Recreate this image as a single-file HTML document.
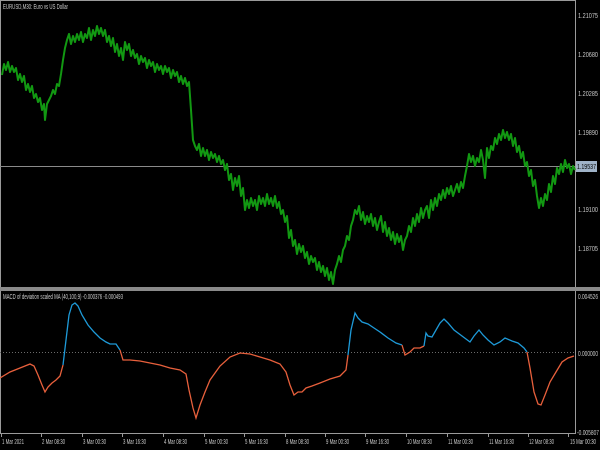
<!DOCTYPE html>
<html><head><style>
html,body{margin:0;padding:0;background:#000;width:600px;height:450px;overflow:hidden}
svg{display:block}
text{font-family:"Liberation Sans",sans-serif;font-size:7px;fill:#c8c8c8}
</style></head><body>
<svg width="600" height="450" viewBox="0 0 600 450" xmlns="http://www.w3.org/2000/svg">
<rect width="600" height="450" fill="#000"/>
<line x1="575.5" y1="0" x2="575.5" y2="434" stroke="#9a9a9a" stroke-width="1"/>
<line x1="0.5" y1="0" x2="0.5" y2="434" stroke="#9a9a9a" stroke-width="1"/>
<line x1="0" y1="0.5" x2="576" y2="0.5" stroke="#9a9a9a" stroke-width="1"/>
<rect x="0" y="287" width="600" height="4" fill="#8a8a8a"/>
<line x1="0" y1="433.5" x2="576" y2="433.5" stroke="#9a9a9a" stroke-width="1"/>
<line x1="0" y1="166.5" x2="575" y2="166.5" stroke="#8a8a8a" stroke-width="1"/>
<polyline fill="none" stroke="#129812" stroke-width="2" stroke-linejoin="round" points="
2,75 4,64 6,70 8,62 10,72 12,66 14,72 16,68 18,80 20,74 22,82 24,76 26,90 28,84 30,92 32,86 34,98 36,94 38,102 40,98 42,110 44,104 45,120 47,104 49,100 51,96 53,90 55,94 57,84 59,86 61,74 63,60 65,48 67,40 69,34 71,44 73,36 75,42 77,34 79,40 81,32 83,42 85,34 87,38 89,28 91,40 93,30 95,36 97,26 99,34 101,28 103,36 105,30 107,42 109,36 111,46 113,38 115,52 117,44 119,56 121,48 123,60 125,42 127,50 129,44 131,56 133,50 135,58 137,54 139,64 141,56 143,62 145,58 147,68 149,60 151,66 153,62 155,72 157,64 159,70 161,66 163,74 165,66 167,72 169,68 171,78 173,70 175,76 177,72 179,82 181,76 183,84 185,78 187,86 189,82 191,110 193,140 195,146 197,150 199,144 201,156 203,148 205,156 207,150 209,160 211,152 213,158 215,154 217,162 219,156 221,164 223,160 225,170 227,164 229,180 231,174 233,190 235,178 237,186 239,176 241,196 243,188 245,210 247,200 249,208 251,198 253,206 255,200 257,210 259,196 261,204 263,198 265,206 267,194 269,204 271,198 273,206 275,196 277,208 279,202 281,214 283,210 285,222 287,216 289,238 291,230 293,246 295,240 297,254 299,244 301,252 303,246 305,258 307,252 309,264 311,256 313,262 315,258 317,270 319,262 321,272 323,266 325,276 327,268 329,280 331,272 333,284 335,270 337,264 339,256 341,262 343,250 345,246 347,236 349,240 351,226 353,220 355,210 357,214 359,206 361,220 363,212 365,224 367,216 369,222 371,214 373,226 375,218 377,230 379,222 381,216 383,232 385,222 387,236 389,228 391,240 393,232 395,244 397,234 399,242 401,236 403,250 405,240 407,236 409,226 411,232 413,218 415,226 417,214 419,222 421,208 423,218 425,210 427,206 429,218 431,200 433,210 435,198 437,206 439,194 441,200 443,190 445,198 447,188 449,194 451,186 453,196 455,190 457,184 459,192 461,182 463,188 465,176 467,166 469,154 471,162 473,156 475,166 477,158 479,162 481,150 483,160 485,178 487,148 489,158 491,146 493,150 495,138 497,144 499,134 501,140 503,130 505,138 507,132 509,140 511,134 513,146 515,138 517,152 519,146 521,158 523,152 525,166 527,162 529,176 531,170 533,186 535,180 537,196 539,208 541,198 543,206 545,194 547,200 549,184 551,192 553,176 555,184 557,168 559,174 561,164 563,172 565,160 567,168 569,164 571,174 573,166 575,170"/>
<g>
<text x="578" y="18" textLength="20" lengthAdjust="spacingAndGlyphs">1.21075</text>
<text x="578" y="57" textLength="20" lengthAdjust="spacingAndGlyphs">1.20680</text>
<text x="578" y="96" textLength="20" lengthAdjust="spacingAndGlyphs">1.20285</text>
<text x="578" y="135" textLength="20" lengthAdjust="spacingAndGlyphs">1.19890</text>
<text x="578" y="212" textLength="20" lengthAdjust="spacingAndGlyphs">1.19100</text>
<text x="578" y="251" textLength="20" lengthAdjust="spacingAndGlyphs">1.18705</text>
</g>
<rect x="576" y="161" width="21" height="11" fill="#9fb3c8"/>
<text x="577" y="169" style="fill:#000" textLength="19" lengthAdjust="spacingAndGlyphs">1.19537</text>
<text x="3" y="9" textLength="65" lengthAdjust="spacingAndGlyphs">EURUSD,M30:  Euro vs US Dollar</text>
<line x1="0" y1="352.5" x2="575" y2="352.5" stroke="#6a6a6a" stroke-width="1" stroke-dasharray="1,2"/>
<text x="3" y="299" textLength="120" lengthAdjust="spacingAndGlyphs">MACD of deviation scaled MA (40,100,9) -0.000376 -0.000493</text>
<polyline fill="none" stroke="#e8603c" stroke-width="1.3" points="0,378 10,372 20,368 30,364 34,366 38,375 42,385 45,392 48,387 52,383 56,380 60,376 63,365"/>
<polyline fill="none" stroke="#1e9ad8" stroke-width="1.3" points="63,365 66,340 69,315 72,305 75,303 78,306 82,315 88,325 94,332 100,338 106,342 110,344 116,344 120,350"/>
<polyline fill="none" stroke="#e8603c" stroke-width="1.3" points="120,350 123,360 130,360 140,361 150,363 160,365 170,368 180,370 186,374 189,390 193,408 196,418 200,405 205,392 210,380 220,366 230,357 240,353 250,354 260,357 270,360 280,364 286,372 290,385 294,395 298,392 302,392 306,388 312,386 320,383 330,379 340,376 346,370 348,355"/>
<polyline fill="none" stroke="#1e9ad8" stroke-width="1.3" points="348,355 351,330 355,313 358,318 362,322 368,324 374,328 380,332 388,338 396,343 402,345"/>
<polyline fill="none" stroke="#e8603c" stroke-width="1.3" points="402,345 405,355 410,352 414,348 420,348 424,346"/>
<polyline fill="none" stroke="#1e9ad8" stroke-width="1.3" points="424,346 426,333 428,336 432,337 436,330 440,323 444,319 448,323 454,330 462,336 470,342 474,336 479,330 483,335 488,340 494,345 500,342 505,338 512,341 518,343 524,348 527,352"/>
<polyline fill="none" stroke="#e8603c" stroke-width="1.3" points="527,352 530,368 534,392 538,404 541,405 545,395 550,382 556,372 562,362 568,358 574,356"/>
<text x="578" y="299" textLength="20" lengthAdjust="spacingAndGlyphs">0.004526</text>
<text x="578" y="356" textLength="20" lengthAdjust="spacingAndGlyphs">0.000000</text>
<text x="577" y="435" textLength="22" lengthAdjust="spacingAndGlyphs">-0.005807</text>
<g stroke="#9a9a9a" stroke-width="1">
<line x1="1.5" y1="434" x2="1.5" y2="437"/><line x1="41.5" y1="434" x2="41.5" y2="437"/><line x1="82.5" y1="434" x2="82.5" y2="437"/><line x1="122.5" y1="434" x2="122.5" y2="437"/><line x1="163.5" y1="434" x2="163.5" y2="437"/><line x1="204.5" y1="434" x2="204.5" y2="437"/><line x1="244.5" y1="434" x2="244.5" y2="437"/><line x1="285.5" y1="434" x2="285.5" y2="437"/><line x1="325.5" y1="434" x2="325.5" y2="437"/><line x1="365.5" y1="434" x2="365.5" y2="437"/><line x1="406.5" y1="434" x2="406.5" y2="437"/><line x1="447.5" y1="434" x2="447.5" y2="437"/><line x1="488.5" y1="434" x2="488.5" y2="437"/><line x1="528.5" y1="434" x2="528.5" y2="437"/><line x1="568.5" y1="434" x2="568.5" y2="437"/>
</g>
<g>
<text x="2" y="444" textLength="22" lengthAdjust="spacingAndGlyphs">1 Mar 2021</text>
<text x="42" y="444" textLength="23" lengthAdjust="spacingAndGlyphs">2 Mar 08:30</text>
<text x="83" y="444" textLength="23" lengthAdjust="spacingAndGlyphs">3 Mar 00:30</text>
<text x="123" y="444" textLength="23" lengthAdjust="spacingAndGlyphs">3 Mar 16:30</text>
<text x="164" y="444" textLength="23" lengthAdjust="spacingAndGlyphs">4 Mar 08:30</text>
<text x="205" y="444" textLength="23" lengthAdjust="spacingAndGlyphs">5 Mar 00:30</text>
<text x="245" y="444" textLength="23" lengthAdjust="spacingAndGlyphs">5 Mar 16:30</text>
<text x="286" y="444" textLength="23" lengthAdjust="spacingAndGlyphs">8 Mar 08:30</text>
<text x="326" y="444" textLength="23" lengthAdjust="spacingAndGlyphs">9 Mar 00:30</text>
<text x="366" y="444" textLength="23" lengthAdjust="spacingAndGlyphs">9 Mar 16:30</text>
<text x="407" y="444" textLength="25" lengthAdjust="spacingAndGlyphs">10 Mar 08:30</text>
<text x="448" y="444" textLength="25" lengthAdjust="spacingAndGlyphs">11 Mar 00:30</text>
<text x="489" y="444" textLength="25" lengthAdjust="spacingAndGlyphs">11 Mar 16:30</text>
<text x="529" y="444" textLength="25" lengthAdjust="spacingAndGlyphs">12 Mar 08:30</text>
<text x="570" y="444" textLength="26" lengthAdjust="spacingAndGlyphs">15 Mar 00:30</text>
</g>
</svg>
</body></html>
